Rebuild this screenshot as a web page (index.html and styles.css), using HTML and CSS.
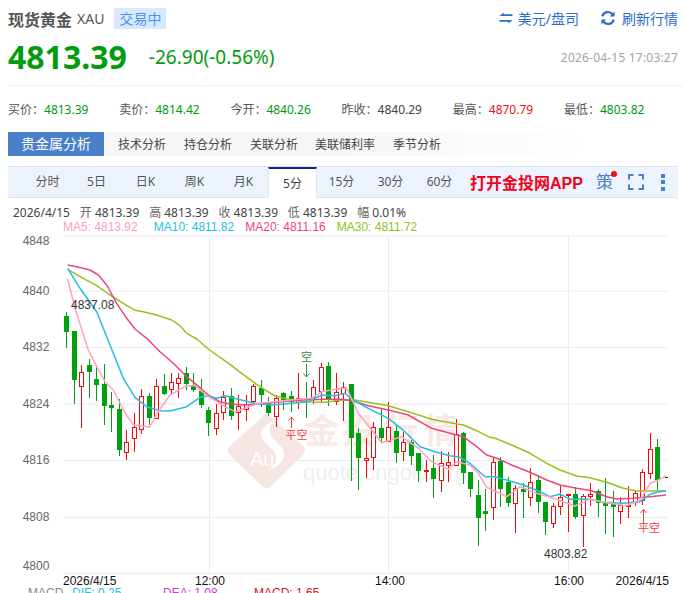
FILE: index.html
```html
<!DOCTYPE html>
<html lang="zh">
<head>
<meta charset="utf-8">
<title>现货黄金 XAU</title>
<link rel="stylesheet" href="styles.css">
</head>
<body>
<div class="page">
  <header class="head">
    <h1 class="name">现货黄金</h1>
    <span class="code">XAU</span>
    <span class="badge">交易中</span>
    <div class="actions">
      <a class="action action-swap">
        <svg class="ico-swap" viewBox="0 0 15 12"><path d="M0.5 3.800H14.500V1.900H5V0L0.5 3.800ZM14.500 8.200H0.5V10.100H10V12L14.500 8.200Z"/></svg>
        美元/盘司
      </a>
      <a class="action">
        <svg class="ico-refresh" viewBox="0 0 16 16"><path d="M2.200 6.400A6 6 0 0 1 12.600 4.200M13.800 9.600A6 6 0 0 1 3.400 11.800"/><path class="tip" d="M14.600 1.600V6.600H9.800ZM1.400 14.400V9.400H6.200Z"/></svg>
        刷新行情
      </a>
    </div>
  </header>

  <div class="price-row">
    <span class="price">4813.39</span>
    <span class="delta">-26.90(-0.56%)</span>
    <time class="stamp">2026-04-15 17:03:27</time>
  </div>

  <ul class="stats">
    <li>买价：<b class="down">4813.39</b></li>
    <li>卖价：<b class="down">4814.42</b></li>
    <li>今开：<b class="down">4840.26</b></li>
    <li>昨收：<b class="flat">4840.29</b></li>
    <li>最高：<b class="up">4870.79</b></li>
    <li>最低：<b class="down">4803.82</b></li>
  </ul>

  <nav class="tabs">
    <a class="tab tab-on">贵金属分析</a>
    <a class="tab">技术分析</a>
    <a class="tab">持仓分析</a>
    <a class="tab">关联分析</a>
    <a class="tab">美联储利率</a>
    <a class="tab">季节分析</a>
  </nav>

  <div class="periods">
    <a class="period">分时</a>
    <a class="period">5日</a>
    <a class="period">日K</a>
    <a class="period">周K</a>
    <a class="period">月K</a>
    <a class="period period-on">5分</a>
    <a class="period">15分</a>
    <a class="period">30分</a>
    <a class="period">60分</a>
    <a class="open-app">打开金投网APP</a>
    <span class="strategy">策<i class="dot"></i></span>
    <svg class="ico-full" viewBox="0 0 16 16"><path d="M1 5.500V1H5.500M10.500 1H15V5.500M15 10.500V15H10.500M5.500 15H1V10.500"/></svg>
    <span class="more"><i></i><i></i><i></i></span>
  </div>

  <div class="info">
    <span class="info-date">2026/4/15</span>
    <span><em>开</em> 4813.39</span>
    <span><em>高</em> 4813.39</span>
    <span><em>收</em> 4813.39</span>
    <span><em>低</em> 4813.39</span>
    <span><em>幅</em> 0.01%</span>
  </div>
  <div class="ma">
    <span class="c5">MA5: 4813.92</span>
    <span class="c10">MA10: 4811.82</span>
    <span class="c20">MA20: 4811.16</span>
    <span class="c30">MA30: 4811.72</span>
  </div>
</div>

<svg class="chart" viewBox="0 233 683 360" width="683" height="360">
  <g class="grid">
    <path d="M63 236H668M63 291H668M63 347.500H668M63 404H668M63 460.500H668M63 517.500H668M63 573.500H668M209.500 236V573M388.500 236V573M568.500 236V573"/>
  </g>
  <g class="axis">
    <text x="36" y="245">4848</text>
    <text x="36" y="295">4840</text>
    <text x="36" y="351">4832</text>
    <text x="36" y="408">4824</text>
    <text x="36" y="464">4816</text>
    <text x="36" y="521">4808</text>
    <text x="36" y="570">4800</text>
  </g>
  <g class="mark">
    <path class="mark-logo" d="M266.700 413L303 446Q307 450 303 455L270 487Q266.700 490 263 487L230 455Q226 450 230 446Z"/>
    <path class="mark-curve" d="M275 420C262 432 275 440 282 448C288 456 280 468 268 470C282 462 276 452 268 445C258 436 258 428 275 420Z"/>
    <text class="mark-au" x="250" y="466">Au</text>
    <text class="mark-cn" x="305" y="443">金</text>
    <text class="mark-cn" x="342" y="443">投</text>
    <text class="mark-cn" x="384" y="443">行</text>
    <text class="mark-cn" x="424" y="443">情</text>
    <text class="mark-url" x="303" y="480">quote.cngold.org</text>
  </g>
  <g id="candles"></g>
  <g id="lines"></g>
  <path class="tick" d="M665 477.500H668"/>
  <g class="signal-short">
    <text x="306.500" y="361">空</text>
    <path d="M306.500 364V376.500M303.500 373.500L306.500 377L309.500 373.500"/>
  </g>
  <g class="signal-flat">
    <text x="296.500" y="439">平空</text>
    <path d="M291.500 428V417M288.500 420.500L291.500 417L294.500 420.500"/>
    <text x="649" y="532">平空</text>
    <path d="M643.500 524V509.500M640.500 513L643.500 509.500L646.500 513"/>
  </g>
  <g class="extreme">
    <text x="71" y="309">4837.08</text>
    <text x="544" y="558">4803.82</text>
  </g>
  <g class="time">
    <text x="63" y="585">2026/4/15</text>
    <text class="mid" x="210" y="585">12:00</text>
    <text class="mid" x="390" y="585">14:00</text>
    <text class="mid" x="569" y="585">16:00</text>
    <text class="end" x="669" y="585">2026/4/15</text>
  </g>
  <g class="macd">
    <text class="macd-name" x="28" y="597">MACD</text>
    <text class="macd-dif" x="72" y="597">DIF: 0.25</text>
    <text class="macd-dea" x="163" y="597">DEA: 1.08</text>
    <text class="macd-val" x="254" y="597">MACD: 1.65</text>
  </g>
</svg>
<script src="chart.js"></script>
</body>
</html>
```
FILE: styles.css
```css
* { box-sizing: border-box; }
html, body { margin: 0; height: 593px; overflow: hidden; background: #fff; }
body { font-family: "Noto Sans", "Noto Sans CJK SC", sans-serif; color: #444; font-size: 12px; }
a { cursor: pointer; }
.page { padding: 8px 5px 0 8px; }

.head { display: flex; align-items: center; height: 21px; }
.name { margin: 0; font-size: 16px; font-weight: 700; color: #555; }
.code { margin-left: 5px; font-size: 14px; color: #555; }
.badge { margin-left: 10px; width: 52px; height: 21px; line-height: 21px; text-align: center; font-size: 14px; background: #d6e9fd; color: #4f90ee; }
.actions { margin-left: auto; display: flex; gap: 21px; margin-top: -1px; }
.action { display: flex; align-items: center; gap: 6px; font-size: 14px; color: #2b6ccf; }
.action-swap { gap: 5px; }
.ico-swap { width: 14px; height: 12px; fill: #2b6ccf; }
.ico-refresh { width: 16px; height: 16px; fill: none; stroke: #2b6ccf; stroke-width: 2.200; }
.ico-refresh .tip { fill: #2b6ccf; stroke: none; }

.price-row { display: flex; align-items: center; height: 57px; padding: 7px 0 8px; border-bottom: 1px solid #eee; margin-right: -5px; }
.price { font-size: 32px; font-weight: 700; color: #009c0e; line-height: 42px; }
.delta { margin-left: 22px; font-size: 19px; font-weight: 400; color: #009c0e; }
.stamp { margin-left: auto; margin-right: 5px; margin-top: 2px; font-size: 12px; letter-spacing: 0.2px; color: #a3a3a3; }

.stats { display: grid; grid-template-columns: repeat(6, 111.200px); list-style: none; margin: 0; padding: 0; height: 46px; align-items: center; color: #555; }
.stats b { font-weight: 400; }
.down { color: #009c0e; }
.up { color: #f51010; }
.flat { color: #444; }

.tabs { display: flex; align-items: center; height: 24px; width: 578px; background: linear-gradient(90deg, #f6f6f6 60%, #fff); }
.tab { margin-left: 18px; font-size: 12px; color: #444; }
.tab-on { margin: 0 -4px 0 0; width: 96px; height: 24px; line-height: 24px; text-align: center; background: #4a7fc9; color: #fff; font-size: 14px; }
.tab:nth-child(5) { margin-left: 17px; }

.periods { display: flex; align-items: center; margin-top: 10px; height: 32px; background: #edf3fc; border-top: 1px solid #dde4f2; border-bottom: 1px solid #dde4f2; padding-left: 15px; position: relative; width: 670px; }
.period { width: 49px; height: 30px; line-height: 30px; text-align: center; font-size: 12px; color: #555; }
.period-on { background: #fff; border-top: 2px solid #0b2a8c; border-left: 1px solid #dde4f2; border-right: 1px solid #dde4f2; height: 31px; margin-bottom: -1px; line-height: 29px; align-self: flex-start; color: #444; }
.open-app { margin-left: 6px; font-size: 16px; font-weight: 700; color: #f5001c; white-space: nowrap; font-family: "Liberation Sans", "Noto Sans CJK SC", sans-serif; }
.strategy { position: relative; margin-left: 13px; font-size: 17px; color: #4a7fc9; line-height: 20px; }
.dot { position: absolute; right: -4px; top: -1px; width: 6px; height: 6px; border-radius: 50%; background: #f51010; }
.ico-full { margin-left: 15px; width: 16px; height: 16px; fill: none; stroke: #4a7fc9; stroke-width: 2; }
.more { margin-left: 17px; display: flex; flex-direction: column; gap: 2.500px; }
.more i { display: block; width: 4px; height: 4px; background: #4a7fc9; }

.info { display: flex; gap: 9.800px; height: 15px; margin-top: 7px; padding-left: 5px; line-height: 15px; color: #444; }
.info em { font-style: normal; color: #666; }
.ma { display: flex; height: 15px; padding-left: 55px; line-height: 15px; font-family: "Liberation Sans", sans-serif; }
.ma span { margin-right: 16px; }
.ma .c10 { margin-right: 11px; }
.ma .c20 { margin-right: 11px; }
.c5 { color: #ff9dbb; }
.c10 { color: #22bfe0; }
.c20 { color: #f0447f; }
.c30 { color: #94c11e; }

.chart { display: block; position: absolute; left: 0; top: 233px; font-family: "Liberation Sans", sans-serif; font-size: 12px; }
.grid path { fill: none; stroke: #ececec; stroke-width: 1; }
.axis text { fill: #666; text-anchor: middle; }
.mark-logo { fill: #f6e6e3; }
.mark-curve { fill: #fff; }
.mark-au { fill: #fff; font-size: 20px; }
.mark-cn { fill: #f8e9e6; font-size: 34px; font-weight: 700; font-family: "Noto Sans CJK SC", sans-serif; }
.mark-url { fill: #eeeeee; font-size: 22px; }
.wick-up { stroke: #f50a0a; }
.wick-down { stroke: #00a010; }
.body-up { fill: #fff; stroke: #f50a0a; }
.body-down { fill: #00a010; }
.line { fill: none; stroke-width: 1.500; stroke-linejoin: round; }
.line-5 { stroke: #ffa3c0; }
.line-10 { stroke: #22bfe0; }
.line-20 { stroke: #f0447f; }
.line-30 { stroke: #98c01e; }
.tick { stroke: #222; fill: none; }
.signal-short text, .signal-flat text { text-anchor: middle; font-size: 11px; font-family: "Noto Sans CJK SC", sans-serif; }
.signal-short text { fill: #2a8f3e; }
.signal-flat text { fill: #f53c3c; }
.signal-short path { fill: none; stroke: #2a8f3e; }
.signal-flat path { fill: none; stroke: #f53c3c; }
.extreme text { fill: #333; }
.time text { fill: #111; }
.time .mid { text-anchor: middle; }
.time .end { text-anchor: end; }
.macd-name { fill: #888; }
.macd-dif { fill: #22bfe0; }
.macd-dea { fill: #d03cc8; }
.macd-val { fill: #d01020; }
```
FILE: chart.js
```js
// x, kind (u = rising, hollow red; d = falling, solid green), wick top, wick bottom, body top, body bottom
var candles = [
  [66.5,'d',312,348,316,332],[74.5,'d',331,404,331,380],[81.5,'u',365,428,372,386],[89.5,'d',359,398,365,372],
  [96.5,'d',365,401,379,385],[104.5,'d',364,425,384,406],[111.5,'d',392,432,405,408],[119.5,'d',399,456,409,450],
  [126.5,'u',430,460,442,452],[134.5,'u',413,452,427,438],[141.5,'u',389,434,396,429],[149.5,'d',393,425,396,418],
  [156.5,'u',379,419,386,418],[164.5,'d',374,395,386,394],[171.5,'u',373,395,382,389],[178.5,'u',373,398,378,383],
  [186.5,'d',367,390,373,384],[193.5,'d',373,392,385,390],[201.5,'d',379,408,391,405],[208.5,'d',407,436,410,423],
  [216.5,'u',404,435,413,428],[223.5,'u',391,420,397,412],[231.5,'d',388,420,396,416],[238.5,'u',395,430,406,412],
  [246.5,'u',395,421,404,409],[253.5,'u',384,405,386,401],[261.5,'d',380,407,388,395],[268.5,'d',397,416,402,413],
  [276.5,'u',395,427,398,416],[283.5,'d',392,410,393,400],[291.5,'d',391,412,396,402],[298.5,'u',373,409,398,402],
  [306.5,'d',382,418,398,400],[313.5,'u',380,404,387,397],[321.5,'u',363,402,367,391],[328.5,'d',362,406,366,399],
  [336.5,'u',373,405,392,401],[343.5,'u',382,421,387,393],[351.5,'d',384,481,384,438],[358.5,'d',428,490,433,458],
  [366.5,'u',438,478,458,460],[373.5,'u',422,470,427,457],[381.5,'d',409,442,428,438],[388.5,'u',402,441,427,441],
  [396.5,'d',425,463,431,453],[403.5,'u',432,461,442,451],[411.5,'d',440,465,442,456],[418.5,'d',453,482,453,471],
  [426.5,'u',460,482,470,471],[433.5,'d',455,498,468,479],[441.5,'u',451,492,463,480],[448.5,'u',452,482,462,465],
  [456.5,'u',419,465,434,465],[463.5,'d',432,484,433,473],[470.5,'d',472,497,472,489],[478.5,'d',480,546,495,518],
  [485.5,'d',489,531,511,514],[493.5,'u',457,520,462,507],[500.5,'d',457,507,461,489],[508.5,'d',477,507,482,503],
  [515.5,'u',485,533,488,503],[523.5,'d',483,518,489,492],[530.5,'u',468,506,482,497],[538.5,'d',475,513,480,502],
  [545.5,'d',502,535,502,522],[553.5,'u',503,528,506,523],[560.5,'u',485,515,497,506],[568.5,'u',494,532,494,495],
  [575.5,'d',487,519,494,517],[583.5,'u',494,547,496,515],[590.5,'u',483,506,494,496],[598.5,'d',489,517,491,503],
  [605.5,'d',478,534,503,506],[613.5,'d',491,537,503,507],[620.5,'u',497,524,505,511],[628.5,'u',486,518,505,506],
  [635.5,'u',490,506,493,502],[642.5,'u',469,505,472,500],[650.5,'u',433,479,449,473],[657.5,'d',439,490,447,480]
];

var lines = {
  30: '67.7,269.3 83.3,278.3 96.7,285.7 110,295 123.3,303.3 135,310.3 143.3,311.7 156.7,315 171.7,320 180,325.7 186.7,333.3 196.7,339 208.3,349 220,357.3 230,364.3 241.7,373.3 258.3,385.7 275,396 291.7,400 308.3,402 325,402.3 341.7,400 355,400 368.3,402.3 388.3,405.7 408.3,411.7 431.7,419.3 450,422.7 463.3,425 476.7,430.7 488.3,436.7 495,438.3 510,444.3 530,453.3 546.7,463.3 560,470 576.7,476 590,477.7 606.7,482.3 623.3,488.3 636.7,491 650,491 666,490.7',
  20: '67.7,265 76.7,266.7 90,270 98.3,275 106.7,285 116.7,303.3 126.7,318.3 135,329 146.7,338.3 160,351.7 173.3,363.3 186.7,376.7 200,387.7 208.3,395 220,402 230,404 245,405 265,403.3 281.7,401.7 301.7,400 325,399.3 341.7,399.3 353.3,401 368.3,405.7 388.3,410 408.3,415 431.7,428.3 450,433.3 463.3,436.7 476.7,446.7 486.7,455 496.7,458.3 513.3,465.7 530,472.3 546.7,480 560,485 576.7,488.3 591.7,490.7 606.7,496.7 616.7,499 633.3,498.3 650,496.7 666,495',
  10: '67.7,268.3 80,288.3 96.7,311.7 110,345 123.3,378.3 135,397.3 146.7,406.7 160,410.7 170,411 186.7,406.7 200,397.3 208.3,396 216.7,398.3 225,395.7 238.3,399.3 255,403.3 271.7,405 291.7,403.3 308.3,401.7 321.7,395 335,395.7 345,393.3 353.3,400 368.3,408.3 388.3,418.3 405,431.7 420,446.7 435,451.7 450,455.7 460,457.3 470,463.3 485,476.7 495,476.7 510,481 523.3,485 540,491.7 550,496.7 560,494 570,499.3 590,499.3 603.3,502.3 623.3,503.3 640,501.7 650,494.3 656.7,492.3 666,490.7',
  5: '67.7,279.3 75,308.3 88.3,350 96.7,366.7 105,381.7 113.3,390 125,413 133.3,424.7 150,427 156.7,414 170,395 186.7,385.7 195,385.7 208.3,396.7 220,403.3 225,406.7 235,411.7 245,408.3 258.3,403.3 275,401.7 298.3,399.3 311.7,398.3 321.7,391.7 341.7,388.3 346.7,388.3 358.3,413.3 371.7,430 381.7,442.7 401.7,436.7 418.3,448.3 431.7,461.7 448.3,469.3 456.7,461.7 470,465 478.3,473.3 486.7,487.3 506.7,496.7 520,486.7 536.7,493.3 553.3,498.3 575,506 590,499 603.3,502.3 626.7,505.7 640,500 650,483.3 658.3,480 666,475.7'
};

var cHtml = '';
candles.forEach(function (c) {
  var up = c[1] === 'u';
  var x = c[0], h = Math.max(c[5] - c[4], 1);
  cHtml += '<path class="' + (up ? 'wick-up' : 'wick-down') + '" d="M' + x + ' ' + c[2] + 'V' + c[3] + '"/>';
  if (up) {
    cHtml += '<rect class="body-up" x="' + (x - 2) + '" y="' + (c[4] + 0.5) + '" width="4" height="' + h + '"/>';
  } else {
    cHtml += '<rect class="body-down" x="' + (x - 2.5) + '" y="' + c[4] + '" width="5" height="' + h + '"/>';
  }
});
document.getElementById('candles').innerHTML = cHtml;

var lHtml = '';
[30, 20, 10, 5].forEach(function (k) {
  lHtml += '<polyline class="line line-' + k + '" points="' + lines[k] + '"/>';
});
document.getElementById('lines').innerHTML = lHtml;
```
